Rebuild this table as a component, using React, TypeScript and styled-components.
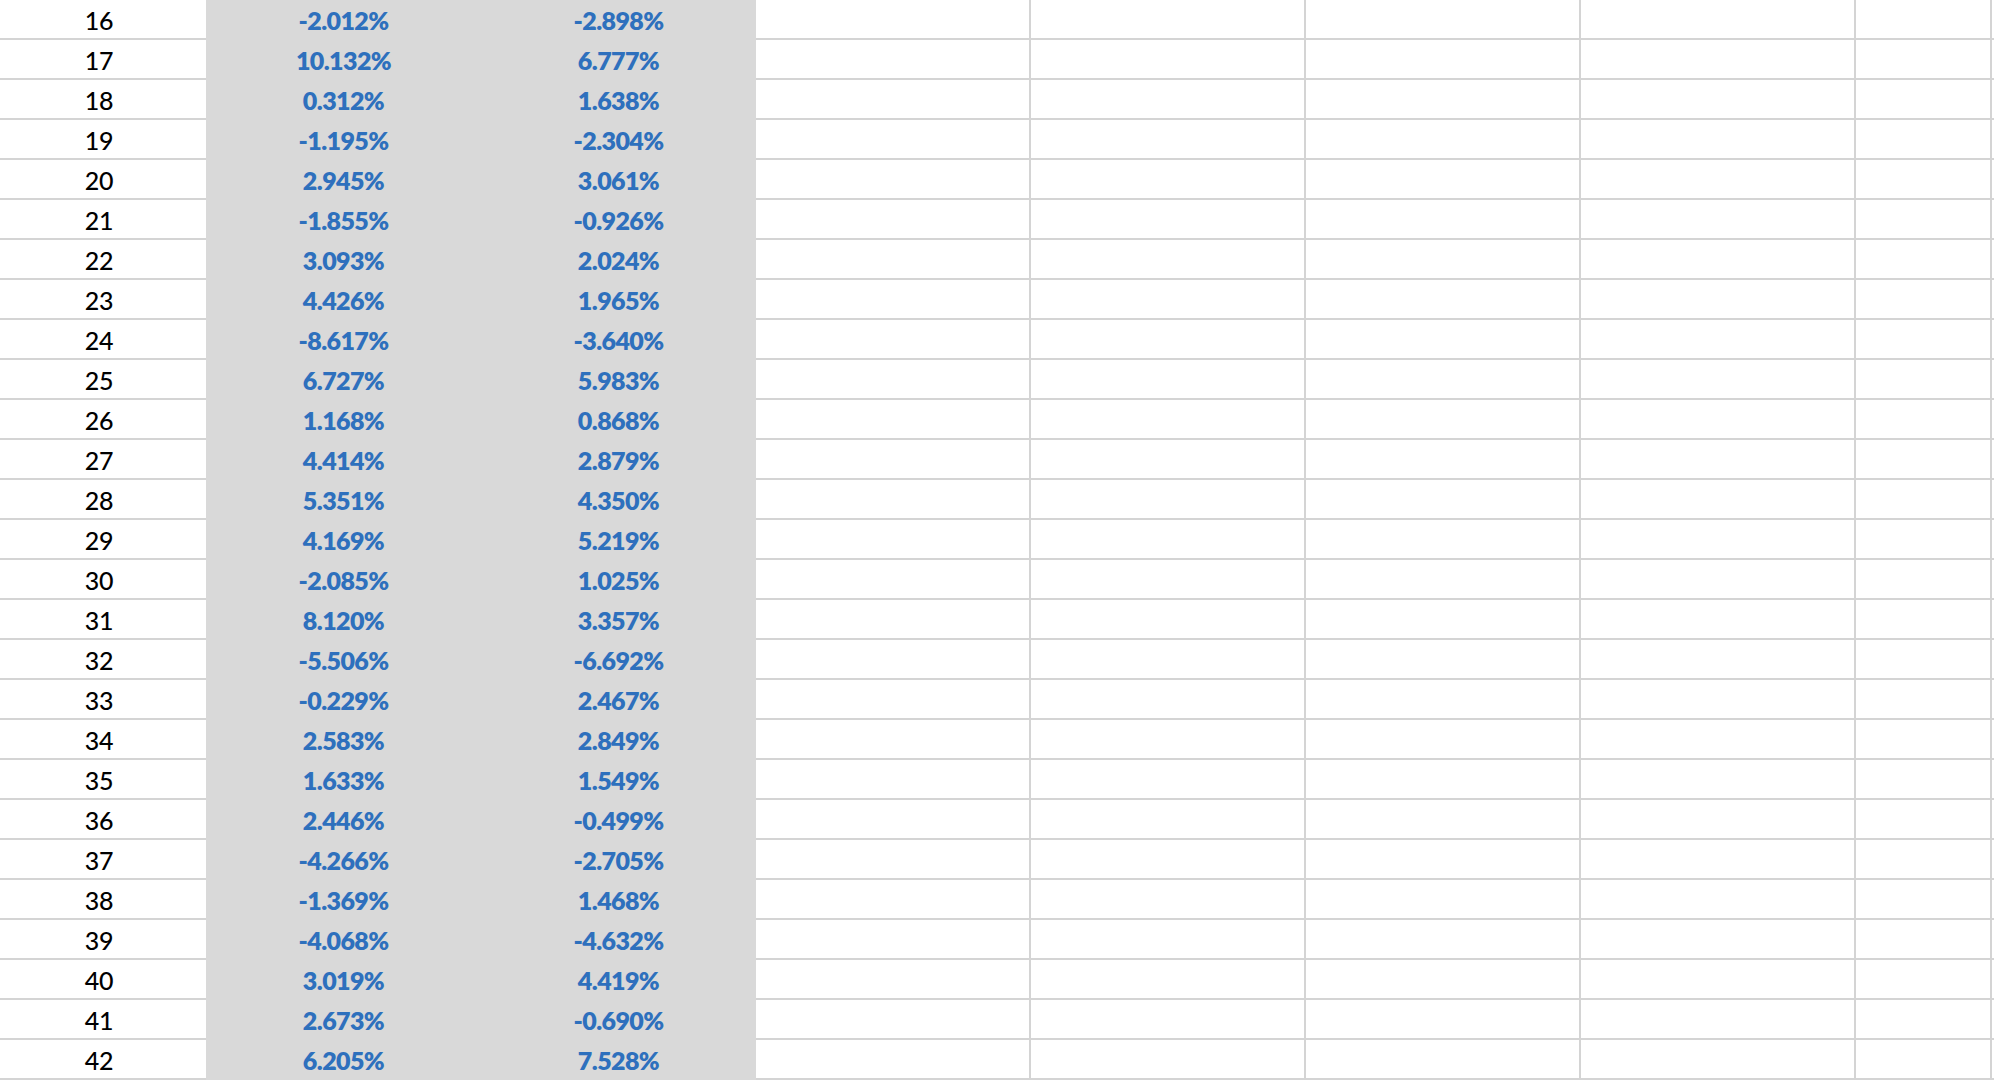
import React from "react";
import styled, { createGlobalStyle } from "styled-components";

const GlobalStyle = createGlobalStyle`
  html, body {
    margin: 0;
    padding: 0;
    background: #ffffff;
    overflow: hidden;
  }
  body {
    font-family: Lato, "Liberation Sans", sans-serif;
  }
`;

const GRID = "#d4d4d4";
const FILL = "#d9d9d9";

const Sheet = styled.div`
  display: grid;
  grid-template-columns: 206px 275px 275px 275px 275px 275px 275px 136px 1fr;
  grid-auto-rows: 40px;
  width: 1994px;
  height: 1080px;
  overflow: hidden;
  background: #ffffff;
`;

const Cell = styled.div<{ $filled?: boolean; $right?: boolean; $pr?: number }>`
  box-sizing: border-box;
  display: flex;
  align-items: center;
  justify-content: center;
  height: 40px;
  padding-top: 2px;
  padding-right: ${(p) => p.$pr ?? 0}px;
  background: ${(p) => (p.$filled ? FILL : "#ffffff")};
  border-bottom: 2px solid ${(p) => (p.$filled ? FILL : GRID)};
  border-right: ${(p) => (p.$right ? `2px solid ${GRID}` : "none")};
  font-family: Lato, "Liberation Sans", sans-serif;
  font-size: 25px;
  line-height: 36px;
  white-space: nowrap;
`;

const RowLabel = styled.span`
  color: #000000;
  font-weight: 500;
  letter-spacing: -0.3px;
`;

const Value = styled.span`
  color: #2e70bd;
  font-weight: 800;
  letter-spacing: -0.6px;
`;

const rows: [number, string, string][] = [
  [16, "-2.012%", "-2.898%"],
  [17, "10.132%", "6.777%"],
  [18, "0.312%", "1.638%"],
  [19, "-1.195%", "-2.304%"],
  [20, "2.945%", "3.061%"],
  [21, "-1.855%", "-0.926%"],
  [22, "3.093%", "2.024%"],
  [23, "4.426%", "1.965%"],
  [24, "-8.617%", "-3.640%"],
  [25, "6.727%", "5.983%"],
  [26, "1.168%", "0.868%"],
  [27, "4.414%", "2.879%"],
  [28, "5.351%", "4.350%"],
  [29, "4.169%", "5.219%"],
  [30, "-2.085%", "1.025%"],
  [31, "8.120%", "3.357%"],
  [32, "-5.506%", "-6.692%"],
  [33, "-0.229%", "2.467%"],
  [34, "2.583%", "2.849%"],
  [35, "1.633%", "1.549%"],
  [36, "2.446%", "-0.499%"],
  [37, "-4.266%", "-2.705%"],
  [38, "-1.369%", "1.468%"],
  [39, "-4.068%", "-4.632%"],
  [40, "3.019%", "4.419%"],
  [41, "2.673%", "-0.690%"],
  [42, "6.205%", "7.528%"],
];

export default function App() {
  return (
    <>
      <GlobalStyle />
      <Sheet>
        {rows.map(([n, b, c]) => (
          <React.Fragment key={n}>
            <Cell $pr={8}>
              <RowLabel>{n}</RowLabel>
            </Cell>
            <Cell $filled>
              <Value>{b}</Value>
            </Cell>
            <Cell $filled>
              <Value>{c}</Value>
            </Cell>
            <Cell $right />
            <Cell $right />
            <Cell $right />
            <Cell $right />
            <Cell $right />
            <Cell />
          </React.Fragment>
        ))}
      </Sheet>
    </>
  );
}
